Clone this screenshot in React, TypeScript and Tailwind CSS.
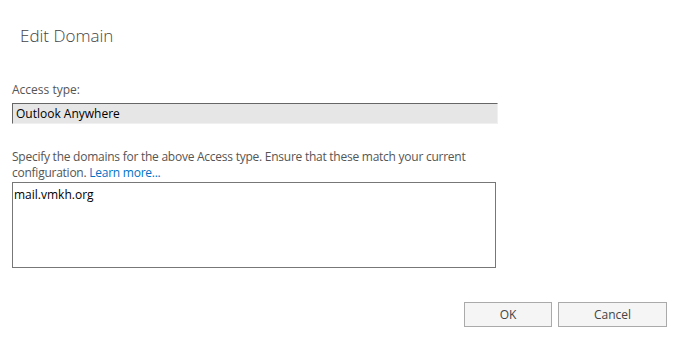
import React from 'react';

const font = { fontFamily: '"Open Sans", "Noto Sans", sans-serif' };

export default function App() {
  return (
    <div className="w-[700px] h-[360px] bg-white text-[#333]" style={font}>
      <div className="pt-[24px] pl-[20px]">
        <h1 className="text-[17px] font-light leading-[24px] text-[#444]">Edit Domain</h1>
      </div>

      <div className="pl-[12px] pt-[34px]">
        <div className="text-[12px] leading-[16px] text-[#555]">Access type:</div>
        <div className="mt-[5px] w-[486px] h-[21px] bg-[#e6e6e6] border-t border-l border-t-[#666] border-l-[#666] border-r border-b border-r-[#f0f0f0] border-b-[#f0f0f0] pl-[3px] text-[12px] leading-[19px] text-black">
          Outlook Anywhere
        </div>

        <p className="mt-[25px] w-[486px] text-[12px] leading-[16px] tracking-[-0.25px] text-[#555]">
          Specify the domains for the above Access type. Ensure that these match your current configuration.{' '}
          <a className="text-[#0072c6]" href="#">Learn more...</a>
        </p>

        <div className="mt-[1px] w-[484px] h-[86px] border border-[#777] px-[1px] pt-[4px] text-[12px] leading-[16px] text-black">
          mail.vmkh.org
        </div>
      </div>

      <div className="flex justify-end gap-[6px] pr-[33px] pt-[34px]">
        <button className="w-[88px] h-[25px] border border-[#aaa] bg-[#f5f5f5] text-[12px] text-[#444]">OK</button>
        <button className="w-[109px] h-[25px] border border-[#aaa] bg-[#f5f5f5] text-[12px] text-[#444]">Cancel</button>
      </div>
    </div>
  );
}
